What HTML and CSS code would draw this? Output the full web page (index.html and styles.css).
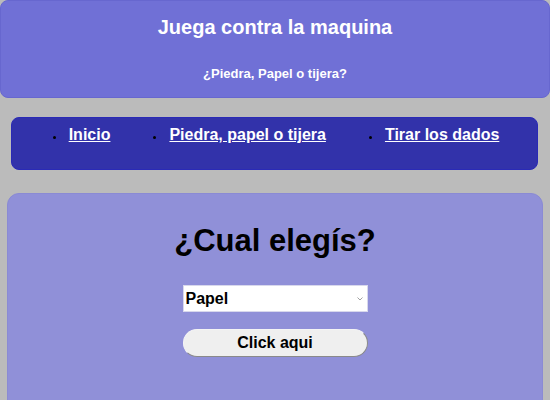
FILE: index.html
```html
<!DOCTYPE html>
<html lang="es">
<head>
<meta charset="utf-8">
<title>Juega contra la maquina</title>
<link rel="stylesheet" href="styles.css">
</head>
<body>
<header class="top">
  <h1 class="top-title">Juega contra la maquina</h1>
  <p class="top-sub">¿Piedra, Papel o tijera?</p>
</header>
<nav class="menu">
  <ul class="menu-list">
    <li class="menu-item"><a href="#">Inicio</a></li>
    <li class="menu-item"><a href="#">Piedra, papel o tijera</a></li>
    <li class="menu-item"><a href="#">Tirar los dados</a></li>
  </ul>
</nav>
<main class="card">
  <h2 class="card-title">¿Cual elegís?</h2>
  <div class="select-wrap">
    <select class="choice">
      <option>Piedra</option>
      <option selected>Papel</option>
      <option>Tijera</option>
    </select>
    <svg class="chev" width="6" height="4" viewBox="0 0 6 4"><path d="M0.5 0.5 L3 3 L5.5 0.5" fill="none" stroke="#a0a0a0" stroke-width="1"/></svg>
  </div>
  <button class="go">Click aqui</button>
</main>
</body>
</html>
```
FILE: styles.css
```css
html, body { margin: 0; padding: 0; }
body {
  background: #bbbbbb;
  font-family: "Liberation Sans", Arial, sans-serif;
  height: 400px;
  overflow: hidden;
}
.top {
  background: #7070d6;
  border: 1px solid #6767cf;
  border-radius: 8px;
  height: 96px;
  text-align: center;
  color: #fff;
}
.top-title {
  margin: 0;
  padding-top: 15px;
  font-size: 20px;
  line-height: 22px;
}
.top-sub {
  margin: 29px 0 0;
  font-size: 13px;
  font-weight: bold;
  line-height: 14px;
}
.menu {
  margin: 19px 12px 0 11px;
  height: 51px;
  background: #3232aa;
  border: 1px solid #2a2ab6;
  border-radius: 8px;
}
.menu-list {
  list-style: none;
  margin: 0;
  padding: 8px 0 0 3px;
  display: flex;
  justify-content: center;
  gap: 43px;
}
.menu-item {
  position: relative;
  padding-left: 16px;
  font-size: 16px;
  font-weight: bold;
  line-height: 18px;
}
.menu-item::before {
  content: "";
  position: absolute;
  left: 0;
  top: 10px;
  width: 3px;
  height: 3px;
  border-radius: 50%;
  background: #000;
}
.menu-item a { color: #fff; text-decoration: underline; }
.card {
  margin: 23px 7px 0;
  height: 260px;
  background: #9090d8;
  border: 1px solid #8a8ad4;
  border-radius: 12px;
  display: flex;
  flex-direction: column;
  align-items: center;
}
.card-title {
  margin: 30px 0 0;
  font-size: 31px;
  line-height: 34px;
  color: #000;
}
.select-wrap {
  position: relative;
  margin-top: 27px;
  width: 185px;
  height: 27px;
}
.choice {
  appearance: none;
  -webkit-appearance: none;
  width: 185px;
  height: 27px;
  margin: 0;
  padding: 0 0 0 2px;
  background: #fff;
  border: 1px solid #d8d8ec;
  border-radius: 0;
  font-family: "Liberation Sans", Arial, sans-serif;
  font-size: 16px;
  font-weight: bold;
  color: #000;
}
.chev {
  position: absolute;
  right: 5px;
  top: 12px;
}
.go {
  margin-top: 17px;
  width: 185px;
  height: 28px;
  background: #efefef;
  border: 1px solid;
  border-color: #f4f4f4 #8a8a8a #8a8a8a #f4f4f4;
  border-radius: 14px;
  font-family: "Liberation Sans", Arial, sans-serif;
  font-size: 16px;
  font-weight: bold;
  color: #000;
}
```
